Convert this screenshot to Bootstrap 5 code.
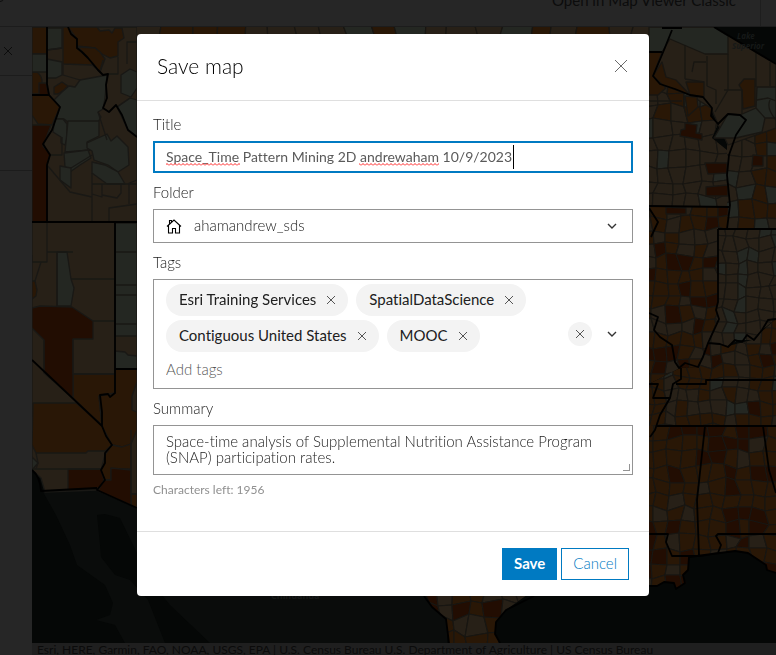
<!DOCTYPE html>
<html lang="en">
<head>
<meta charset="utf-8">
<meta name="viewport" content="width=device-width, initial-scale=1">
<title>Save map</title>
<link href="https://cdn.jsdelivr.net/npm/bootstrap@5.3.0/dist/css/bootstrap.min.css" rel="stylesheet">
<style>
  :root { --blue: #007ac2; --line: #949494; --ink: #222; }
  body { font-family: Lato, "Liberation Sans", sans-serif; font-size: 15px; font-weight: 300; line-height: 16px; color: var(--ink); background: #262626; font-variant-ligatures: none; }
  svg { display: block; flex: none; }
  .app-shell { height: 100vh; overflow: hidden; color: #0c0c0c; }
  .app-bar { height: 27px; border-bottom: 1px solid #1c1c1c; overflow: hidden; }
  .app-bar a { color: #0c0c0c; line-height: 20px; margin-bottom: 16px; font-weight: 400; }
  .app-bar-end { width: 16px; margin-left: 24px; border-left: 1px solid #1e1e1e; }
  .side-strip { width: 32px; }
  .side-head { height: 49px; border-bottom: 1px solid #1c1c1c; }
  .side-block { height: 95px; border-bottom: 1px solid #1c1c1c; }
  .map-row, .map-view { min-height: 0; }
  .map-view { background: #050706; }
  .credits { height: 12px; overflow: hidden; white-space: nowrap; padding-left: 5px; font-size: 12px; font-weight: 400; line-height: 14px; background: #1f1f1f; color: #0b0b0b; }
  .save-modal { padding-left: 10px; }
  .save-dialog { max-width: 512px; margin-top: 34px; }
  .save-dialog .modal-content { border: 0; border-radius: 4px; color: var(--ink); }
  .save-dialog .modal-header { padding: 19px 20px 21px; height: 67px; border-color: #dfdfdf; border-radius: 0; }
  .save-dialog .modal-title { font-size: 21px; line-height: 24px; color: #000; font-weight: 300; }
  .save-dialog .modal-body { padding: 4px 16px 33px; }
  .save-dialog .modal-footer { padding: 16px 20px; gap: 4px; border-color: #dfdfdf; }
  .save-dialog .modal-footer > * { margin: 0; }
  .field-label { display: block; padding: 11px 0 9px; }
  .field-box { border: 1px solid var(--line); border-radius: 0; color: var(--ink); font-size: 15px; font-weight: 300; line-height: 16px; background: #fff; font-variant-ligatures: none; }
  .title-box { height: 32px; padding: 0 11px 2px; border: 2px solid var(--blue); font-size: 14px; font-weight: 400; color: #5a5a5a; }
  .title-box:focus { box-shadow: none; border-color: var(--blue); }
  .folder-box { height: 34px; padding: 0 40px 2px; appearance: none; background-image: none; }
  .over-mid { position: absolute; top: 0; height: 100%; display: flex; align-items: center; pointer-events: none; }
  .folder-icon { left: 13px; }
  .typing-marks { position: absolute; left: 0; top: 0; pointer-events: none; }
  .tag-box { padding: 4px 12px; min-height: 110px; }
  .tag-list { gap: 4px 8px; width: 390px; }
  .tag-chip { height: 32px; border-radius: 16px; background: #f3f3f3; color: #202020; padding: 0 11px 0 13px; font-weight: 400; }
  .chip-name { padding-bottom: 2px; }
  .bare { border: 0; padding: 0; background: none; display: flex; align-items: center; justify-content: center; }
  .tag-chip .bare { width: 12px; height: 24px; margin-left: 9px; }
  .tag-input { border: 0; outline: 0; padding: 0 0 2px; height: 28px; width: 100%; font-weight: 300; }
  .tag-input::placeholder { color: #555; }
  .clear-tags { width: 24px; height: 24px; border-radius: 12px; background: #f3f3f3; }
  .summary-box { display: block; width: 100%; height: 50px; padding: 7px 12px; resize: none; overflow: hidden; }
  .resize-grip { position: absolute; right: 3px; bottom: 4px; width: 7px; height: 7px; border: solid #949494; border-width: 0 1px 1px 0; pointer-events: none; }
  .count-note { font-size: 12px; font-weight: 400; padding-top: 7px; color: #909090; }
  .action-btn { height: 32px; border-radius: 0; padding: 0 11px 2px; font-size: 15px; line-height: 16px; border: 1px solid var(--blue); }
  .action-save, .action-save:hover { background: var(--blue); color: #fff; }
  .action-cancel { color: var(--blue); background: #fff; font-weight: 300; }
</style>
<script src="https://cdn.jsdelivr.net/npm/bootstrap@5.3.0/dist/js/bootstrap.bundle.min.js"></script>
</head>
<body>
<div class="app-shell d-flex flex-column">
  <header class="app-bar d-flex align-items-end flex-shrink-0">
    <svg width="8" height="27" fill="none" stroke="#0e0e0e"><path d="M0 2.500q3 0 4-3"/></svg>
    <a class="ms-auto text-decoration-none" href="#">Open in Map Viewer Classic</a>
    <div class="app-bar-end align-self-stretch"></div>
  </header>
  <div class="map-row d-flex flex-grow-1">
    <aside class="side-strip flex-shrink-0">
      <div class="side-head d-flex align-items-center ps-1">
        <svg width="8" height="8" stroke="#0c0c0c" fill="none"><path d="M0 0l8 8M8 0L0 8"/></svg>
      </div>
      <div class="side-block"></div>
    </aside>
    <div class="d-flex flex-column flex-grow-1 overflow-hidden">
      <main class="map-view flex-grow-1">
        <svg id="map" width="100%" height="100%" viewBox="32 27 744 616" preserveAspectRatio="xMinYMin slice" role="img" aria-label="County map">
          <defs>
            <clipPath id="top"><path d="M137 27H649V40H137z"/></clipPath>
            <clipPath id="north"><path d="M649 52L662 52 655 76 660 84 690 95 711 106 711 116 718 124 712 138 727 150 727 207 649 207z"/></clipPath>
            <clipPath id="lake"><path d="M727 132L776 128V229H727z"/></clipPath>
            <clipPath id="mid"><path d="M649 207H728L727 229H718V302L717 320 708 343 698 367 680 368 649 384z"/></clipPath>
            <clipPath id="east"><path d="M718 229H776V319L762 330 752 340 738 340 728 346 708 343 717 320z"/></clipPath>
            <clipPath id="river"><path d="M649 384L680 368 698 367 708 343 728 346 752 340 776 319V426H649z"/></clipPath>
            <clipPath id="south"><path d="M649 426H776V573L767 570 766 565 748 553 735 551 700 556 689 557 688 570 683 576 686 583 676 589 674 583 664 582 657 586H649z"/></clipPath>
            <clipPath id="texas"><path d="M424 590H534L520 600 506 610 496 622 495 634 500 643H449L446 619 432 607z"/></clipPath>
          </defs>
          <path fill="#0a0c0b" d="M43 492L97 489 137 508V560H424L447 619V643H210L170 605 150 580 120 518 105 514 97 515 100 545 101 557 115 575 130 580 148 600 165 643H125L115 625 96 620 110 615 113 603 105 585 77 565 70 545 63 530 56 515z"/>
          <g id="west" stroke="#191815" stroke-width="1.300" stroke-linejoin="round">
            <path fill="#272017" d="M32 27H137V508L98 490 45 492 41 478 32 470z"/>
            <g fill="#291706">
              <path d="M32 27H47V54H32z"/><path d="M32 72h5q4 3 5 8v14H32z"/>
              <path d="M32 95H49L60 107 52 125 38 124 32 115z"/>
              <path d="M63 27H68L77 39V48L88 58 98 70 92 65 63 64z"/>
              <path d="M68 27H97L100 31 109 30 112 33 115 28H122L124 38 118 42V56L110 58 102 54 95 48 77 46V39z"/>
              <path d="M78 47L95 48 100 52 105 59 100 72 88 58z"/>
              <path d="M54 87L62 82 68 86 64 90 58 94 54 94z"/>
              <path d="M32 281H35L37 290 36 296 32 299z"/>
              <path d="M73 374H115V393L110 397 105 394 99 396 102 426 73 398z"/>
              <path d="M33 403H76L102 425 106 434 112 445 105 451H88L86 453H36L32 445z"/>
              <path d="M115 369H137V382L132 396V410L137 412V430L131 444 122 447 112 445 102 426 99 396 115 393z"/>
              <path d="M112 445L122 447 131 444V469H111V480H104L101 470 105 455z"/><path d="M131 494H137V508L131 505z"/>
            </g>
            <g fill="#220d02">
              <path d="M39 83L46 83 49 95H39z"/><path d="M32 125H51L43 146 50 154 47 165V222H32z"/>
              <path d="M32 308L40 306 72 307 93 321V339H73V398L44 373V340L32 328z"/>
              <path d="M68 469H101L104 480 103 488 68 490z"/><path d="M111 468L131 470V505L98 491 104 480H111z"/>
            </g>
            <g fill="#242722">
              <path d="M32 54H47V72H32z"/><path d="M47 28H62V48L47 50z"/><path d="M47 59L62 62V75L56 78H47z"/>
              <path d="M54 100L62 92 69 86 75 87 80 80 107 75 105 98 103 109 98 112 101 117 98 122H68L64 119H56L60 107z"/>
              <path d="M55 119H63L67 124V138L65 145 61 143 61 137 53 132z"/>
              <path d="M68 121H99V136L87 142 88 147 92 150 65 152z"/>
              <path d="M64 153L88 150 91 158 80 165 70 172 65 167z"/>
              <path d="M87 143L98 138 105 135 107 134 111 141 117 136 128 147 129 165 118 172 108 165 94 160 92 151 87 148z"/>
              <path d="M60 166L71 168V188L60 180z"/><path d="M92 162L105 165 118 172 125 184H107L92 173z"/>
              <path d="M121 75L130 69 137 72V88L131 97 121 93z"/><path d="M117 107L130 98 137 100V137L128 130z"/>
              <path d="M115 223H137V336H115z"/><path d="M115 351L125 352 128 355 137 356V369H115z"/>
              <path d="M57 252H67L71 279 74 288 71 306H57z"/><path d="M32 457L38 463 32 470z"/>
            </g>
            <path fill="none" d="M63 65V75L80 80M108 74H118V57M137 42H127V64M103 60L100 71M98 112L107 140M47 165L70 192 92 197V222M92 173V222M71 168L92 155M49 155H62V137M92 184H137M102 184V197L92 194M102 195L117 198 121 193V184M129 184V204M109 222V208L137 204M127 184L137 180M117 107L130 98M47 222V262H32M73 252H47M47 222V252M57 252V306M71 279H115M93 321H115M73 339V374H115M41 262L35 281M44 340V373M32 262V255M115 252H137M115 285H137M115 295H137M115 324H137M32 469H101M36 453L38 463 36 469M131 430V494H137M47 60V50L62 48"/>
          </g>
          <g id="cells" stroke="#181612" stroke-width="1.200"></g>
          <g stroke="#181612" stroke-width="1.300" stroke-linejoin="round">
            <path fill="#272017" d="M672 30H776V128L728 145 718 124 711 108 690 95 660 84 653 76z"/>
            <path fill="#242722" d="M649 27H714L728 36V54H705L670 39 662 52H649z"/>
            <path fill="#291706" d="M649 52H662L653 76 666 88 658 95H649zM662 62L666 77 676 80 690 95 660 84 653 76zM686 82H704V97L690 95zM744 79H755V106L743 109 742 90 739 85zM685 96L697 97 698 107 688 116z"/>
            <path fill="#242722" d="M728 114L740 115 756 108 765 118 762 132 736 138H714zM757 87H776V118L765 118 756 108z"/>
            <path fill="#220d02" d="M685 123L697 125 696 133 702 134V140L680 136 681 130 685 129zM705 163H727V173L708 174zM706 187L728 185V196H706zM753 155L763 156V166H752zM666 207L686 208V214H666z"/>
            <path fill="none" d="M685 45V79M685 79L704 82M707 56V86M707 86L716 90V104M728 54V90L715 112M724 90L742 90 742 114M756 53V87M770 62V86M692 72L694 62 706 62M757 100L768 98 776 101M770 100Q766 108 776 120M649 101H682M684 96V107"/>
          </g>
          <path fill="#050706" d="M714 27L776 27V64z"/>
          <g fill="none" stroke="#000" stroke-width="1.800" stroke-linejoin="round">
            <path d="M47 27V84L49 95 60 107 52 130 43 144 50 155 47 165V222M32 95H49M32 222H137M68 27L71 34 77 39 77 48 82 52 88 58 98 70 103 75 108 74 106 85 107 98 103 108 109 112 116 105 122 115 128 130 137 137M115 222V393L110 397 108 394 100 395 102 412 102 426 106 436 112 445 105 453 105 463 101 470 105 480 97 490 137 508M32 360L102 426M115 369H137M32 470Q40 476 41 491L97 488"/>
            <path d="M662 28h20M649 52H662M672 30L664 50 653 76 660 84 675 89 690 95 703 97 712 108 711 116 718 124 728 114 740 115 746 120 736 135 729 155 727 175 730 205 727 229M649 206L730 207M649 208L658 222 651 237M718 229H776M718 229V302L716 310 719 319 708 343M649 313L658 317 654 330 660 337 672 345 675 362 679 368 685 363 698 367 703 357 708 343M708 343L720 344 728 347 735 340 742 342 747 335 754 340 762 330 768 320 776 319M676 384H706V380H776M649 384H658L653 398H670M681 368L681 379 673 384 670 398 660 415 655 430 650 437M657 426H776M705 426L697 500 699 555M763 426L769 470 776 493M649 534H668L666 542 672 556 700 556 718 553 721 545 716 536 718 534H776M649 586L657 586 664 582 674 583 676 589 685 583 683 575 688 570 689 557 720 553 735 551 748 553 766 565 767 570 776 573M714 27L776 64M424 596L432 607 446 619 449 643M534 596L506 610 496 622 495 634 500 643"/>
          </g>
          <g fill="#161918" font-family="Noto Sans, sans-serif" font-weight="700">
            <text x="737" y="39" font-size="8" font-style="italic">Lake</text><text x="732" y="49" font-size="8" font-style="italic">Superior</text>
            <text x="271" y="599" font-size="9">Chihuahua</text>
          </g>
        </svg>
      </main>
      <footer class="credits flex-shrink-0">Esri, HERE, Garmin, FAO, NOAA, USGS, EPA | U.S. Census Bureau U.S. Department of Agriculture | US Census Bureau</footer>
    </div>
  </div>
</div>

<div class="modal d-block save-modal" tabindex="-1" role="dialog" aria-labelledby="dlgTitle">
  <div class="modal-dialog save-dialog">
    <form class="modal-content">
      <div class="modal-header">
        <h1 class="modal-title" id="dlgTitle">Save map</h1>
        <button type="button" class="bare me-0" aria-label="Close"><svg width="16" height="16" fill="none" stroke="#6a6a6a"><path d="M2 2l12 12M14 2L2 14"/></svg></button>
      </div>
      <div class="modal-body">
        <label class="field-label" for="title">Title</label>
        <div class="position-relative">
          <input class="form-control field-box title-box" id="title" value="Space_Time Pattern Mining 2D andrewaham 10/9/2023" spellcheck="false">
          <svg class="typing-marks" width="400" height="32" fill="none" aria-hidden="true">
            <defs><pattern id="wave" width="4" height="3" y="22" patternUnits="userSpaceOnUse"><path d="M0 2.500L2 .5 4 2.500" stroke="#f22" fill="none"/></pattern></defs>
            <path fill="url(#wave)" d="M13 22h74v3H13zM206 22h80v3h-80z"/><path stroke="#000" d="M360.500 4v24"/>
          </svg>
        </div>
        <label class="field-label" for="folder">Folder</label>
        <div class="position-relative">
          <select class="form-select field-box folder-box" id="folder"><option>ahamandrew_sds</option></select>
          <span class="over-mid folder-icon"><svg width="16" height="16" fill="none" stroke="#000" stroke-width="1.100"><path d="M1 8.500L8 2l7 6.500M2.500 7.500v7.500h4v-4.500h3V15h4V7.500M3.500 6V2.500h2V4"/></svg></span>
          <span class="over-mid end-0 pe-3"><svg width="10" height="16" fill="none" stroke="#333" stroke-width="1.400"><path d="M1 6l4 4 4-4"/></svg></span>
        </div>
        <label class="field-label" for="tags">Tags</label>
        <div class="field-box tag-box d-flex align-items-center">
          <div class="tag-list d-flex flex-wrap">
            <span class="tag-chip d-inline-flex align-items-center"><span class="chip-name">Esri Training Services</span><button type="button" class="bare" aria-label="Remove Esri Training Services"><svg width="10" height="10" fill="none" stroke="#555"><path d="M1 1l8 8M9 1L1 9"/></svg></button></span>
            <span class="tag-chip d-inline-flex align-items-center"><span class="chip-name">SpatialDataScience</span><button type="button" class="bare" aria-label="Remove SpatialDataScience"><svg width="10" height="10" fill="none" stroke="#555"><path d="M1 1l8 8M9 1L1 9"/></svg></button></span>
            <span class="tag-chip d-inline-flex align-items-center"><span class="chip-name">Contiguous United States</span><button type="button" class="bare" aria-label="Remove Contiguous United States"><svg width="10" height="10" fill="none" stroke="#555"><path d="M1 1l8 8M9 1L1 9"/></svg></button></span>
            <span class="tag-chip d-inline-flex align-items-center"><span class="chip-name">MOOC</span><button type="button" class="bare" aria-label="Remove MOOC"><svg width="10" height="10" fill="none" stroke="#555"><path d="M1 1l8 8M9 1L1 9"/></svg></button></span>
            <input class="tag-input" id="tags" placeholder="Add tags">
          </div>
          <button type="button" class="bare clear-tags ms-auto" aria-label="Clear tags"><svg width="10" height="10" fill="none" stroke="#555"><path d="M1 1l8 8M9 1L1 9"/></svg></button>
          <button type="button" class="bare ms-3 me-1" aria-label="Show tags"><svg width="8" height="16" viewBox="1 0 8 16" overflow="visible" fill="none" stroke="#333" stroke-width="1.400"><path d="M1 6l4 4 4-4"/></svg></button>
        </div>
        <label class="field-label" for="summary">Summary</label>
        <div class="position-relative">
          <textarea class="field-box summary-box" id="summary">Space-time analysis of Supplemental Nutrition Assistance Program (SNAP) participation rates.</textarea>
          <span class="resize-grip"></span>
        </div>
        <div class="count-note">Characters left: 1956</div>
      </div>
      <div class="modal-footer">
        <button type="submit" class="btn action-btn action-save fw-bold">Save</button>
        <button type="button" class="btn action-btn action-cancel">Cancel</button>
      </div>
    </form>
  </div>
</div>
<script>
  // County cells: a jittered grid per region, drawn through the region's outline.
  const S = '#242722', T = '#272017', O = '#291706', D = '#220d02';
  const regions = [
    ['top', 137, 20, 649, 44, 26, [T, T, S, O, T]],
    ['north', 640, 46, 730, 210, 15, [T, T, S, T, O, T, S, T]],
    ['lake', 724, 126, 780, 232, 15, [T, O, T, S, O, T]],
    ['mid', 640, 204, 730, 386, 13, [T, O, O, T, D, O, O]],
    ['east', 700, 226, 780, 348, 12, [T, S, T, T, S, T, T]],
    ['river', 640, 318, 780, 428, 12, [T, O, O, T, O, D, O, T, S]],
    ['south', 640, 424, 780, 592, 14, [O, O, D, O, D, O, D, O, T]],
    ['texas', 420, 586, 540, 646, 16, [D, D, O, T, O]]
  ];
  const rnd = (i, j, k) => { const v = Math.sin(i * 127.1 + j * 311.7 + k * 74.7) * 43758.5453; return v - Math.floor(v); };
  const ns = 'http://www.w3.org/2000/svg', cells = document.getElementById('cells');
  regions.forEach(([id, x0, y0, x1, y1, size, fills], k) => {
    const g = document.createElementNS(ns, 'g');
    g.setAttribute('clip-path', `url(#${id})`);
    const at = (i, j) => [Math.round(x0 + (i + (rnd(i, j, k) - .5) * .5) * size), Math.round(y0 + (j + (rnd(j, i, k + 9) - .5) * .5) * size)];
    for (let i = -1; x0 + i * size < x1; i++) for (let j = -1; y0 + j * size < y1; j++) {
      const p = document.createElementNS(ns, 'polygon');
      p.setAttribute('points', [at(i, j), at(i + 1, j), at(i + 1, j + 1), at(i, j + 1)].join(' '));
      p.setAttribute('fill', fills[Math.floor(rnd(i, j, k + 20) * fills.length)]);
      g.append(p);
    }
    cells.append(g);
  });
</script>
</body>
</html>
